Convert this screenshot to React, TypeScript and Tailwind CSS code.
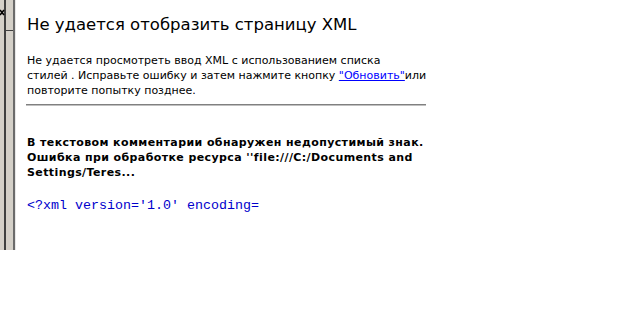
export default function App() {
  return (
    <div className="flex h-[327px] w-[644px] bg-white">
      {/* IE-style left frame edge */}
      <div className="relative flex h-[250px] w-[16px] shrink-0">
        <div className="w-[4px] bg-[#d4d0c8]" />
        <div className="w-[2px] bg-[#404040]" />
        <div className="w-[7px] bg-[#d4d0c8]" />
        <div className="w-[2px] bg-[#6b6b6b]" />
        <div className="w-[1px] bg-[#e8e8e8]" />
        <svg className="absolute left-0 top-[9px]" width="5" height="7" viewBox="0 0 5 7">
          <path d="M0 1 L4 6 M4 1 L0 6" stroke="#000" strokeWidth="1.6" />
        </svg>
        <div className="absolute left-[4px] top-[30px] h-[1px] w-[9px] bg-[#404040]" />
      </div>

      <div className="w-[410px] pl-[10px] pt-[15px] text-black [font-family:'DejaVu_Sans',Verdana,sans-serif]">
        <h1 className="pl-[1px] text-[16.5px] leading-[20px] font-normal">
          Не удается отобразить страницу XML
        </h1>
        <p className="mt-[18px] whitespace-nowrap pl-[1px] text-[11px] leading-[15px]">
          Не удается просмотреть ввод XML с использованием списка
          <br />
          стилей . Исправьте ошибку и затем нажмите кнопку{" "}
          <span className="text-[#0000ff] underline">"Обновить"</span>или
          <br />
          повторите попытку позднее.
        </p>
        <div className="mt-[6px] h-[2px] border-t border-[#808080] bg-[#c0c0c0]" />
        <p className="mt-[29px] whitespace-nowrap pl-[1px] text-[11px] leading-[15px] font-bold tracking-[0.4px]">
          В текстовом комментарии обнаружен недопустимый знак.
          <br />
          Ошибка при обработке ресурса ''file:///C:/Documents and
          <br />
          Settings/Teres...
        </p>
        <pre className="mt-[18px] pl-[1px] text-[13.33px] leading-[15px] text-[#0000cc] [font-family:'Liberation_Mono',monospace]">
          {"<?xml version='1.0' encoding="}
        </pre>
      </div>
    </div>
  );
}
